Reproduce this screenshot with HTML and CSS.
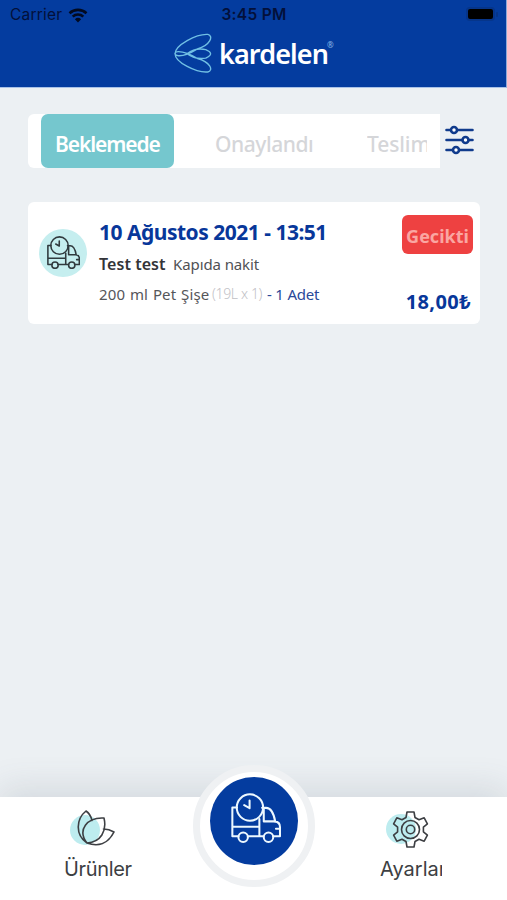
FILE: index.html
```html
<!DOCTYPE html>
<html lang="tr">
<head>
<meta charset="utf-8">
<title>Kardelen</title>
<link rel="stylesheet" href="styles.css">
</head>
<body>
<svg class="defs" aria-hidden="true">
  <symbol id="truck" viewBox="0 0 148 148">
    <circle cx="56" cy="43" r="39"/>
    <path d="M39 36l16 9V22M18 43H4v85h18M50 128h45M84 77v51M4 100h80M92 44h12c14 0 23 18 27 41M97 48v36h33c10 1 15 7 15 17v27h-20M145 106h-12"/>
    <circle cx="36" cy="131" r="14"/><circle cx="111" cy="131" r="14"/>
  </symbol>
</svg>
<div class="app">
  <header class="header">
    <div class="status">
      <div class="carrier"><span class="carrier-name">Carrier</span>
        <svg class="wifi" viewBox="0 0 20 15"><path d="M1.5 5.2a12.5 12.5 0 0 1 17 0M4.7 8.6a7.8 7.8 0 0 1 10.6 0"/><path class="dot" d="M6.9 11.2a4.5 4.5 0 0 1 6.2 0L10 14.5z"/></svg>
      </div>
      <span class="time">3:45 PM</span>
      <div class="battery-wrap"><span class="battery"></span><span class="battery-cap"></span></div>
    </div>
    <div class="brand">
      <svg class="brand-mark" viewBox="0 0 110 116"><path d="M3 60C3 35 65 2 98 4C116 8 104 36 68 46C50 57 30 67 13 66Q2 64 3 60Q3 54 13 54C30 54 50 63 68 74C104 84 116 108 98 113C65 116 3 85 3 60ZM38 60C56 46 78 45 92 48Q120 60 92 73C78 75 56 74 38 60Z"/></svg>
      <span class="brand-name">kardelen</span><span class="reg">®</span>
    </div>
  </header>
  <main class="content">
    <div class="filters">
      <nav class="tabs">
        <span class="tab active">Beklemede</span>
        <span class="tab second">Onaylandı</span>
        <span class="tab third">Teslim</span>
      </nav>
      <svg class="sliders" viewBox="0 0 30 30"><path d="M1.5 5h26M1.5 15h26M1.5 25h26"/><circle cx="9" cy="5" r="3"/><circle cx="20.5" cy="15" r="3"/><circle cx="11" cy="25" r="3"/></svg>
    </div>
    <article class="card">
      <div class="order-icon"><svg><use href="#truck"/></svg></div>
      <div class="order">
        <h2 class="date">10 Ağustos 2021 - 13:51</h2>
        <p class="customer"><b>Test test</b><span>Kapıda nakit</span></p>
        <p class="product"><span class="item">200 ml Pet Şişe</span><span class="pack">(19L x 1)</span><span class="qty">- 1 Adet</span></p>
      </div>
      <div class="side"><span class="late">Gecikti</span><strong class="price">18,00₺</strong></div>
    </article>
  </main>
  <footer class="bottom">
    <a class="nav-item products">
      <svg viewBox="0 0 48 40"><circle class="tint" cx="17" cy="22" r="15"/><path d="M19 35C7 27 8 11 18 3C21 5 23 8 24 12.500M19 35C9 22 19 9 36 10C39 23 33 34 19 35ZM35.500 21Q41 21 46 24C40 36 30 39 19 35"/></svg>
      <span class="products-label">Ürünler</span>
    </a>
    <a class="nav-item settings">
      <svg viewBox="0 0 48 40"><circle class="tint" cx="17" cy="21" r="15"/><path d="M23 4h7l1 5.500 4 2.300 5.200-2 3.200 6-4 3.400v4.600l4 3.400-3.200 6-5.200-2-4 2.300-1 5.500h-7l-1-5.500-4-2.300-5.200 2-3.200-6 4-3.400v-4.600l-4-3.400 3.200-6 5.200 2 4-2.300z"/><circle cx="26.500" cy="21.500" r="9"/><circle cx="26.500" cy="21.500" r="4.200"/></svg>
      <span class="settings-label">Ayarlar</span>
    </a>
    <div class="fab"><div class="fab-disc"><svg><use href="#truck"/></svg></div></div>
  </footer>
</div>
</body>
</html>
```

FILE: styles.css
```css
* { box-sizing: border-box; }
body { margin: 0; background: #ecf0f3; font-family: "Noto Sans", sans-serif; }
svg { display: block; fill: none; stroke: currentColor; stroke-linecap: round; stroke-linejoin: round; }
.defs { position: absolute; width: 0; height: 0; }
p, h2 { margin: 0; }
span, b, strong, h2 { white-space: nowrap; }
.app { height: 900px; display: flex; flex-direction: column; overflow: hidden; }
.header { height: 88px; flex: none; background: #043c9f; border-bottom: 1px solid #a9c2e8; border-right: 1px solid #8da9d8; }
.status { height: 30px; display: grid; grid-template-columns: 1fr auto 1fr; align-items: center; padding: 0 8px 0 10px; color: #03103a; font: 15.5px/30px Inter, sans-serif; }
.carrier { display: flex; align-items: center; gap: 6px; }
.carrier-name { width: 52px; letter-spacing: .2px; }
.wifi { width: 20px; height: 15px; stroke-width: 2.6; stroke-linecap: butt; color: #020a20; }
.wifi .dot { fill: currentColor; stroke: none; }
.time { font-weight: 600; letter-spacing: .3px; }
.battery-wrap { display: flex; justify-content: flex-end; align-items: center; gap: 1px; margin-top: -2px; }
.battery { width: 29px; height: 14px; border: 2px solid #06358a; border-radius: 4px; background: #000; }
.battery-cap { width: 2px; height: 5px; background: #06358a; border-radius: 1px; }
.brand { display: flex; align-items: flex-start; padding-left: 174px; height: 44px; }
.brand-mark { width: 38px; height: 40px; margin-top: 3px; stroke-width: 4; color: #70bfe4; }
.brand-name { margin-left: 7px; color: #fff; font-size: 27px; line-height: 48px; font-weight: 600; letter-spacing: -.9px; width: 108px; }
.reg { font-size: 8px; line-height: 10px; color: #8bb9e6; margin-top: 10px; }
.content { flex: 1; padding: 26px 27px 0 28px; }
.filters { display: flex; height: 54px; }
.tabs { width: 412px; background: #fff; border-radius: 6px 0 0 6px; display: flex; padding-left: 13px; overflow: hidden; font-size: 21px; font-weight: 500; line-height: 60px; color: #d5d6d9; letter-spacing: -.45px; }
.tab { flex: none; }
.active { width: 133px; padding-left: 14px; border-radius: 7px; background: #75c7ce; color: #fff; font-weight: 600; letter-spacing: -1.1px; }
.second { width: 153px; padding-left: 41px; }
.third { width: 60px; margin-left: 40px; overflow: hidden; letter-spacing: -.1px; }
.sliders { width: 30px; height: 30px; margin: 11px 0 0 5px; color: #103b8c; stroke-width: 2.6; }
.sliders circle { fill: #fff; }
.card { margin-top: 34px; height: 122px; background: #fff; border-radius: 6px; display: flex; padding: 0 7px 0 11px; }
.order-icon { width: 48px; height: 48px; border-radius: 50%; background: #c5eeef; margin-top: 27px; padding: 7px 8px; color: #303a3e; }
.order-icon svg { width: 33px; height: 33px; stroke-width: 7; }
.order { margin-left: 12px; flex: 1; }
.date { font-size: 21px; line-height: 30px; margin-top: 15px; color: #08379a; font-weight: 700; letter-spacing: -.5px; }
.customer { display: flex; font-size: 15px; line-height: 20px; margin-top: 7px; color: #505155; letter-spacing: -.1px; }
.customer b { width: 74px; font-size: 16px; color: #333438; font-weight: 600; letter-spacing: .05px; }
.product { display: flex; font-size: 15px; line-height: 20px; margin-top: 10px; color: #55565a; letter-spacing: -.1px; }
.item { width: 113px; letter-spacing: 0; word-spacing: .7px; }
.item { letter-spacing: .15px; }
.pack { width: 55px; color: #bfc1c6; font-weight: 300; font-size: 14px; letter-spacing: -.35px; }
.qty { color: #2b4999; letter-spacing: -.2px; }
.side { display: flex; flex-direction: column; align-items: flex-end; }
.late { width: 71px; height: 39px; margin-top: 13px; border-radius: 6px; background: #ee4141; color: #faa6a2; text-align: center; font-size: 18px; line-height: 42px; font-weight: 700; }
.price { color: #08379a; font-size: 20px; letter-spacing: .4px; line-height: 28px; margin: 34px 2px 0 0; }
.bottom { position: relative; flex: none; height: 103px; background: #fff; display: flex; justify-content: space-between; padding: 11px 63px 0 64px; box-shadow: 0 -8px 34px rgba(80,95,110,.16); }
.nav-item { display: flex; flex-direction: column; color: #3d3f43; font: 20px/28px Inter, sans-serif; }
.nav-item svg { width: 48px; height: 40px; stroke-width: 1.6; margin-left: 4px; }
.nav-item span { margin-top: 7px; }
.tint { fill: #bdecef; stroke: none; }
.products { width: 70px; letter-spacing: -.35px; }
.settings { width: 64px; }
.settings-label { width: 62px; overflow: hidden; }
.fab { position: absolute; left: 193px; top: -32px; width: 122px; height: 122px; border-radius: 50%; border: 7px solid #eff1f3; background: #fff; display: flex; justify-content: center; padding-top: 5px; }
.fab-disc { width: 88px; height: 88px; border-radius: 50%; background: #043c9f; color: #edf8ff; display: flex; justify-content: center; padding: 16px 0 0 4px; }
.fab-disc svg { width: 50px; height: 50px; stroke-width: 6; }
```
